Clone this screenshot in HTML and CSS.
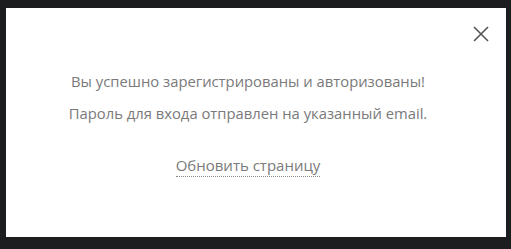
FILE: index.html
```html
<!DOCTYPE html>
<html lang="ru">
<head>
    <meta charset="UTF-8">
    <title>Регистрация</title>
    <link rel="stylesheet" href="styles.css">
</head>
<body>
    <!-- Success modal -->
    <div class="modal">
        <span class="close">
            <svg width="16" height="16" viewBox="0 0 16 16"><path d="M1 1L15 15M15 1L1 15" stroke="#555" stroke-width="1.6"/></svg>
        </span>
        <div class="modal-content">
            <p class="msg">Вы успешно зарегистрированы и авторизованы!</p>
            <p class="msg">Пароль для входа отправлен на указанный email.</p>
            <a href="#" class="reload">Обновить страницу</a>
        </div>
    </div>
</body>
</html>
```

FILE: styles.css
```css
body {
    margin: 0;
    background-color: #1c1d1f;
    font-family: "Open Sans", Arial, sans-serif;
}
.modal {
    position: relative;
    margin: 8px 0 0 6px;
    width: 500px;
    height: 229px;
    background-color: #fff;
}
.close {
    position: absolute;
    right: 17px;
    top: 18px;
    cursor: pointer;
}
.close svg {
    display: block;
}
.modal-content {
    padding: 64px 16px 0 0;
    text-align: center;
}
.msg {
    margin: 0 0 14px;
    font-size: 14.8px;
    line-height: 18px;
    color: #7a7a7a;
}
.reload {
    display: inline-block;
    margin-top: 20px;
    font-size: 15px;
    line-height: 18px;
    color: #7a7a7a;
    text-decoration: none;
    border-bottom: 1px dotted #888;
    padding-bottom: 2px;
}
```
